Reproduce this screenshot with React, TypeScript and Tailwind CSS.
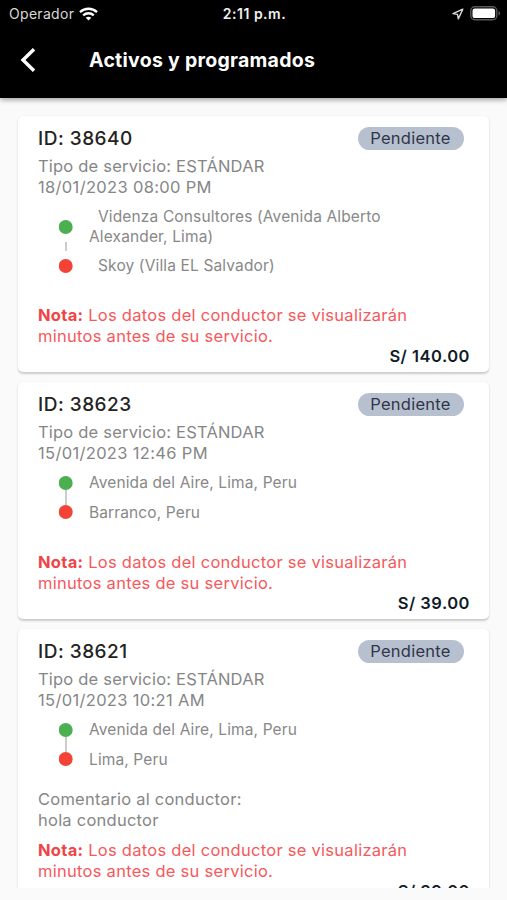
type Trip = {
  id: string;
  date: string;
  from: string[];
  to: string;
  long?: boolean;
  comment?: string;
  price: string;
};

const trips: Trip[] = [
  {
    id: "38640",
    date: "18/01/2023 08:00 PM",
    from: ["Videnza Consultores (Avenida Alberto", "Alexander, Lima)"],
    to: "Skoy (Villa EL Salvador)",
    long: true,
    price: "S/ 140.00",
  },
  {
    id: "38623",
    date: "15/01/2023 12:46 PM",
    from: ["Avenida del Aire, Lima, Peru"],
    to: "Barranco, Peru",
    price: "S/ 39.00",
  },
  {
    id: "38621",
    date: "15/01/2023 10:21 AM",
    from: ["Avenida del Aire, Lima, Peru"],
    to: "Lima, Peru",
    comment: "hola conductor",
    price: "S/ 39.00",
  },
];

function StatusBar() {
  return (
    <div className="grid h-7 grid-cols-3 items-center pl-[9px] pr-[6px] text-[14px]">
      <div className="-mt-px flex items-center gap-[5px] text-[#d8d8d8]">
        <span className="tracking-[0.3px]">Operador</span>
        <svg width="19" height="14" viewBox="0 0 19 14" fill="none" stroke="#fff" strokeWidth="2.3">
          <path d="M1 5.2C5.8.6 13.2.6 18 5.2" />
          <path d="M4.2 8.4c3-2.9 7.6-2.9 10.6 0" />
          <path d="M9.5 13.6 6.7 10.8c1.6-1.5 4-1.5 5.6 0z" fill="#fff" stroke="none" />
        </svg>
      </div>
      <div className="-ml-px -mt-px text-center font-semibold tracking-[0.5px] text-[#f0f0f0]">2:11 p.m.</div>
      <div className="-mt-px flex items-center justify-end gap-[6px]">
        <svg width="12" height="12" viewBox="0 0 12 12" fill="none" stroke="#d8d8d8" strokeWidth="1.4" strokeLinejoin="round">
          <path d="M10.8 1.2 1 5.6l4.500.800.800 4.500z" />
        </svg>
        <svg width="31" height="15" viewBox="0 0 31 15">
          <rect x=".8" y=".8" width="26" height="13" rx="4" fill="none" stroke="#58585a" strokeWidth="1.4" />
          <rect x="2.5" y="2.5" width="22.6" height="9.6" rx="2.2" fill="#fff" />
          <path d="M28.5 5v4.6c1-.4 1.7-1.2 1.7-2.3S29.500 5.400 28.500 5z" fill="#58585a" />
        </svg>
      </div>
    </div>
  );
}

function Card({ trip }: { trip: Trip }) {
  return (
    <article className="shrink-0 rounded-[5px] bg-white pb-[6.5px] pl-5 pr-5 pt-[10px] shadow-[0_1.5px_2px_rgba(0,0,0,0.18),0_0_2px_rgba(0,0,0,0.03)]">
      <div className="flex h-[25px] items-center justify-between pr-[5px]">
        <h2 className="text-[19px] font-medium leading-[25px] tracking-[0.5px] text-[#232323]">ID: {trip.id}</h2>
        <span className="flex h-[23px] w-[106px] items-center justify-center rounded-full bg-[#b7c0cf] pr-px text-[16.5px] tracking-[0.25px] text-[#30364a]">
          Pendiente
        </span>
      </div>
      <div className="mt-[5px] text-[16.5px] leading-[20.75px] text-[#868686]">
        <p className="tracking-[0.2px]">Tipo de servicio: ESTÁNDAR</p>
        <p className="tracking-[0.33px]">{trip.date}</p>
      </div>
      <div
        className={
          trip.long
            ? "mt-[9px] flex text-[15.5px] leading-5 tracking-[0.14px] text-[#888]"
            : "mt-[9.5px] flex text-[15.5px] leading-5 tracking-[0.12px] text-[#888]"
        }
      >
        <div className={trip.long ? "ml-[20.5px] flex w-[14px] flex-col items-center pt-[13px]" : "ml-[20.5px] flex w-[14px] flex-col items-center pt-[3px]"}>
          <svg className={trip.long ? "h-[53px] w-[14px]" : "h-[43px] w-[14px]"} viewBox={trip.long ? "0 0 14 53" : "0 0 14 43"}>
            <path d={trip.long ? "M7 22v9" : "M7 14v15"} stroke="#999" strokeWidth="1" />
            <circle cx="6.7" cy="7" r="7" fill="#4caf50" />
            <circle cx="6.7" cy={trip.long ? "46" : "36"} r="7" fill="#f44336" />
          </svg>
        </div>
        <div className="ml-[16.5px] whitespace-nowrap">
          {trip.from.map((line, i) => (
            <p key={line} className={trip.long && i === 0 ? "pl-[9px]" : ""}>
              {line}
            </p>
          ))}
          <p className={trip.long ? "mt-[9px] pl-[9px]" : "mt-[9.5px]"}>{trip.to}</p>
        </div>
      </div>
      {trip.comment && (
        <div className="mt-[19px] text-[16.5px] leading-[21px] tracking-[0.24px] text-[#868686]">
          <p>Comentario al conductor:</p>
          <p>{trip.comment}</p>
        </div>
      )}
      <div
        className={
          trip.comment
            ? "mt-[9.5px] whitespace-nowrap text-[16.5px] leading-[21px] tracking-[0.27px] text-[#f5595c]"
            : "mt-[29px] whitespace-nowrap text-[16.5px] leading-[21px] tracking-[0.27px] text-[#f5595c]"
        }
      >
        <p>
          <b className="text-[#f04446]">Nota:</b> Los datos del conductor se visualizarán
        </p>
        <p>minutos antes de su servicio.</p>
      </div>
      <div className="-mr-px -mt-px text-right text-[16.5px] font-semibold leading-5 tracking-[0.5px] text-[#101b28]">{trip.price}</div>
    </article>
  );
}

export default function App() {
  return (
    <div className="flex h-[900px] w-[507px] flex-col overflow-hidden bg-[#fafafa] font-['Inter','Liberation_Sans',sans-serif]">
      <header className="z-10 h-[98px] shrink-0 bg-black text-white shadow-[0_2px_5px_rgba(0,0,0,0.35)]">
        <StatusBar />
        <div className="flex h-16 items-center pl-5">
          <svg width="16" height="24" viewBox="0 0 16 24" fill="none" stroke="#fff" strokeWidth="3.4">
            <path d="M14 1.200 3 12l11 10.800" />
          </svg>
          <h1 className="ml-[53px] mt-px text-[19.5px] font-bold tracking-[0.27px]">Activos y programados</h1>
        </div>
      </header>
      <main className="flex h-[790px] shrink-0 flex-col gap-[10px] overflow-hidden px-[18px] pt-[18px]">
        {trips.map((trip) => (
          <Card key={trip.id} trip={trip} />
        ))}
      </main>
    </div>
  );
}
